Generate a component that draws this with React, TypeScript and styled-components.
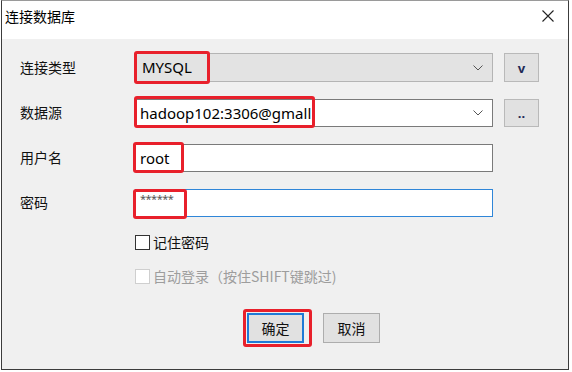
import React from "react"
import styled, { createGlobalStyle } from "styled-components"

const GlobalStyle = createGlobalStyle`
    html, body {
        margin: 0;
        padding: 0;
        background: #ffffff;
    }
    body {
        font-family: "Noto Sans", "Noto Sans CJK SC", sans-serif;
        color: #000;
    }
`

const cjk = `"Noto Sans CJK SC", "Noto Sans", sans-serif`
const latin = `"Noto Sans", "Noto Sans CJK SC", sans-serif`
const red = "#e8202b"

const Window = styled.div`
    box-sizing: border-box;
    margin-left: 1px;
    width: 568px;
    height: 370px;
    border: 1px solid #3c3c3c;
    border-top-color: #9a9a9a;
    display: flex;
    flex-direction: column;
    background: #f0f0f0;
`

const TitleBar = styled.div`
    box-sizing: border-box;
    height: 38px;
    flex: none;
    background: #ffffff;
    display: flex;
    align-items: center;
    justify-content: space-between;
    padding: 0 14px 8px 3px;
    font-family: ${cjk};
    font-size: 14px;
`

const CloseIcon = () => (
    <svg width="12" height="12" viewBox="0 0 12 12">
        <path d="M0.5 0.5 L11.5 11.5 M11.5 0.5 L0.5 11.5" stroke="#222" strokeWidth="1.1" fill="none" />
    </svg>
)

const Body = styled.div`
    flex: 1;
    padding: 14px 0 0 18px;
    display: flex;
    flex-direction: column;
`

const FormGrid = styled.div`
    display: grid;
    grid-template-columns: 104px 358px 35px;
    column-gap: 11px;
    row-gap: 17px;
    align-items: center;
`

const Label = styled.div`
    font-family: ${cjk};
    font-size: 14px;
    color: #111;
    margin-top: -2px;
`

const Field = styled.div<{ $tone: "grey" | "white" | "focus"; $h: number }>`
    position: relative;
    box-sizing: border-box;
    height: ${(p) => p.$h}px;
    display: flex;
    align-items: center;
    padding-left: 4px;
    border: 1px solid ${(p) => (p.$tone === "grey" ? "#b4b4b4" : p.$tone === "focus" ? "#2f86d8" : "#7a7a7a")};
    background: ${(p) => (p.$tone === "grey" ? "#e3e3e3" : "#ffffff")};
    font-family: ${latin};
    font-size: 15px;
    color: #000;
`

const FieldText = styled.span<{ $small?: boolean }>`
    font-size: ${(p) => (p.$small ? "11px" : "15px")};
    margin-top: ${(p) => (p.$small ? "-9px" : "-1px")};
    letter-spacing: ${(p) => (p.$small ? "-0.5px" : "0")};
    color: ${(p) => (p.$small ? "#555" : "#000")};
`

const Chevron = styled.svg`
    position: absolute;
    right: 9px;
    top: 50%;
    margin-top: -3px;
`

const Highlight = styled.div<{ $left: number; $top: number; $w: number; $bottom: number }>`
    position: absolute;
    left: ${(p) => p.$left}px;
    top: ${(p) => p.$top}px;
    bottom: ${(p) => p.$bottom}px;
    width: ${(p) => p.$w}px;
    border: 3px solid ${red};
    border-radius: 3px;
    box-sizing: border-box;
    pointer-events: none;
`

const SideButton = styled.div<{ $h: number }>`
    box-sizing: border-box;
    height: ${(p) => p.$h}px;
    border: 1px solid #b9b9b9;
    background: #e1e1e1;
    display: flex;
    align-items: center;
    justify-content: center;
    font-family: ${latin};
    font-size: 13px;
    font-weight: bold;
    color: #1f2a55;
`

const Checks = styled.div`
    display: flex;
    flex-direction: column;
    gap: 14px;
    margin: 15px 0 0 115px;
`

const CheckRow = styled.label<{ $disabled?: boolean }>`
    display: flex;
    align-items: center;
    gap: 3px;
    font-family: ${cjk};
    font-size: 14px;
    color: ${(p) => (p.$disabled ? "#9d9d9d" : "#111")};
`

const Box = styled.span<{ $disabled?: boolean }>`
    box-sizing: border-box;
    width: 15px;
    height: 15px;
    border: 1px solid ${(p) => (p.$disabled ? "#cfcfcf" : "#333")};
    background: #ffffff;
`

const Buttons = styled.div`
    display: flex;
    gap: 19px;
    margin: 27px 0 0 227px;
`

const DialogButton = styled.div<{ $primary?: boolean }>`
    position: relative;
    box-sizing: border-box;
    width: 57px;
    height: 30px;
    border: ${(p) => (p.$primary ? "2px solid #1f7ad6" : "1px solid #adadad")};
    background: #e1e1e1;
    display: flex;
    align-items: center;
    justify-content: center;
    font-family: ${cjk};
    font-size: 14px;
    color: #111;
`

export default function App() {
    return (
        <>
            <GlobalStyle />
            <Window>
                <TitleBar>
                    <span>连接数据库</span>
                    <CloseIcon />
                </TitleBar>
                <Body>
                    <FormGrid>
                        <Label>连接类型</Label>
                        <Field $tone="grey" $h={29}>
                            <FieldText style={{ paddingLeft: 2 }}>MYSQL</FieldText>
                            <Chevron width="10" height="6" viewBox="0 0 10 6">
                                <path d="M0.5 0.5 L5 5 L9.5 0.5" stroke="#555" fill="none" />
                            </Chevron>
                            <Highlight $left={-2} $top={-3} $bottom={-3} $w={76} />
                        </Field>
                        <SideButton $h={29}>v</SideButton>

                        <Label>数据源</Label>
                        <Field $tone="white" $h={28}>
                            <FieldText>hadoop102:3306@gmall</FieldText>
                            <Chevron width="10" height="6" viewBox="0 0 10 6">
                                <path d="M0.5 0.5 L5 5 L9.5 0.5" stroke="#555" fill="none" />
                            </Chevron>
                            <Highlight $left={-2} $top={-4} $bottom={-2} $w={181} />
                        </Field>
                        <SideButton $h={28}>..</SideButton>

                        <Label>用户名</Label>
                        <Field $tone="white" $h={28}>
                            <FieldText>root</FieldText>
                            <Highlight $left={-3} $top={-3} $bottom={-2} $w={51} />
                        </Field>
                        <div />

                        <Label>密码</Label>
                        <Field $tone="focus" $h={28}>
                            <FieldText $small>******</FieldText>
                            <Highlight $left={-3} $top={-1} $bottom={-3} $w={54} />
                        </Field>
                        <div />
                    </FormGrid>

                    <Checks>
                        <CheckRow>
                            <Box />
                            记住密码
                        </CheckRow>
                        <CheckRow $disabled>
                            <Box $disabled />
                            自动登录（按住SHIFT键跳过)
                        </CheckRow>
                    </Checks>

                    <Buttons>
                        <DialogButton $primary>
                            确定
                            <Highlight $left={-6} $top={-6} $bottom={-6} $w={69} />
                        </DialogButton>
                        <DialogButton>取消</DialogButton>
                    </Buttons>
                </Body>
            </Window>
        </>
    )
}
